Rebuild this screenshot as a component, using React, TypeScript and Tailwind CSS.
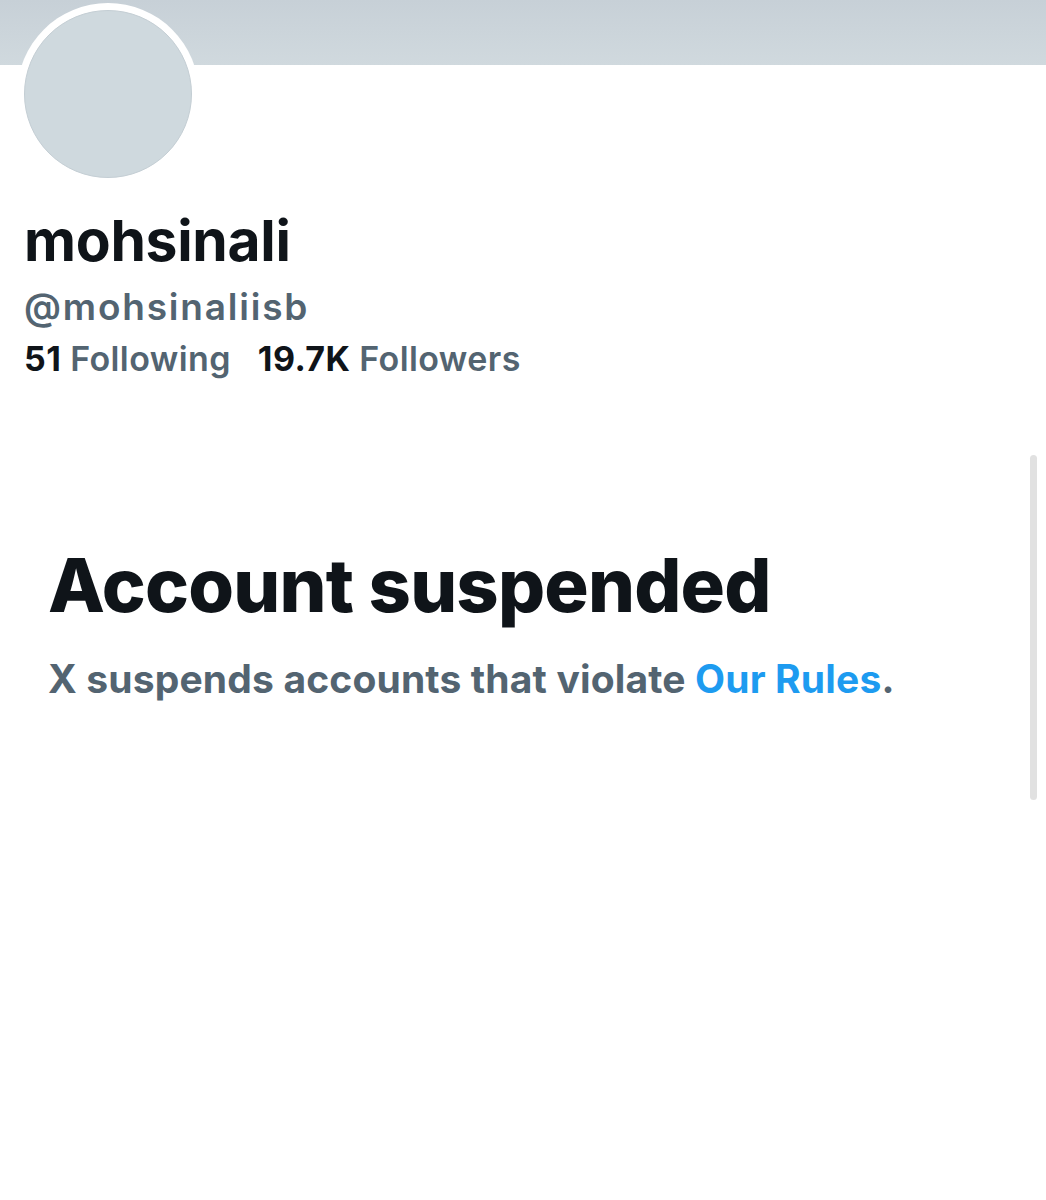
export default function App() {
  return (
    <div className="relative h-[1200px] w-[1046px] overflow-hidden bg-white font-['Inter','Liberation_Sans',sans-serif]">
      <div className="h-[65px] bg-gradient-to-b from-[#c7d0d7] to-[#d0d9de]" />
      <div className="ml-[17px] -mt-[62px] h-[182px] w-[182px] rounded-full bg-white p-[7px]">
        <div className="h-full w-full rounded-full border border-[#c4ced4] bg-[#cfd9de]" />
      </div>
      <div className="ml-[24px] mt-[24px]">
        <div className="text-[57px] font-bold leading-[64px] tracking-[-0.3px] text-[#0f1419]">mohsinali</div>
        <div className="mt-[14px] text-[37px] font-semibold leading-[40px] tracking-[1.8px] text-[#536471]">@mohsinaliisb</div>
        <div className="mt-[12px] flex gap-[27px] text-[34px] font-semibold leading-[40px] tracking-[0.4px] text-[#536471]">
          <span>
            <span className="font-bold text-[#0f1419]">51</span> Following
          </span>
          <span>
            <span className="font-bold text-[#0f1419]">19.7K</span> Followers
          </span>
        </div>
      </div>
      <div className="ml-[48px] mt-[162px]">
        <div className="text-[74px] font-extrabold leading-[88px] tracking-[-0.8px] text-[#0f1419]">Account suspended</div>
        <div className="mt-[26px] text-[39px] font-bold leading-[48px] tracking-[0.15px] text-[#536471]">
          X suspends accounts that violate <span className="text-[#1d9bf0]">Our Rules</span>.
        </div>
      </div>
      <div className="absolute right-[9px] top-[455px] h-[345px] w-[7px] rounded-full bg-[#e1e1e1]" />
    </div>
  )
}
